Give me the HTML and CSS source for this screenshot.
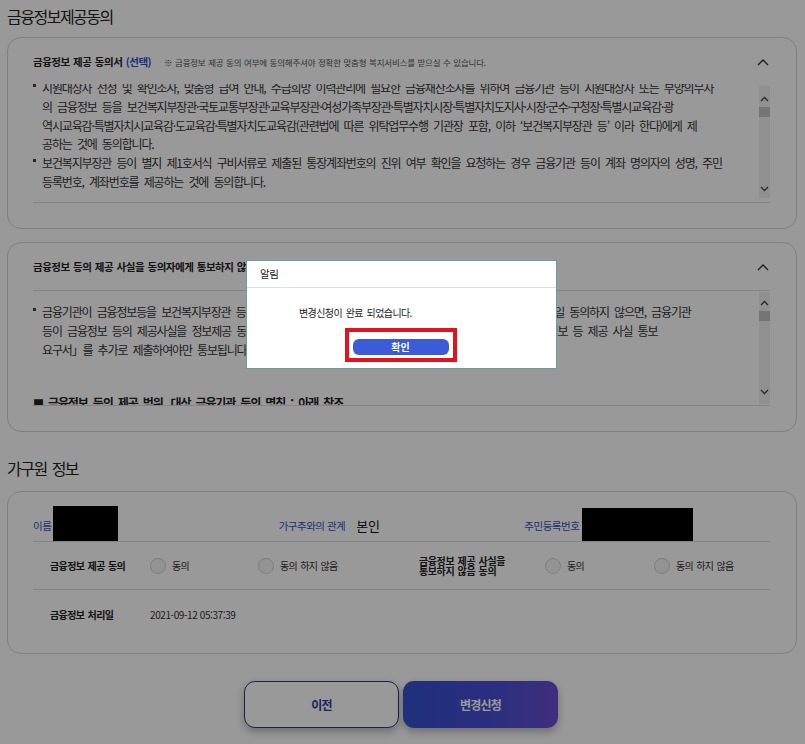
FILE: index.html
```html
<!DOCTYPE html>
<html lang="ko">
<head>
<meta charset="utf-8">
<title>금융정보제공동의</title>
<link rel="stylesheet" href="styles.css">
</head>
<body>
<div class="page">
  <h2 class="section-title">금융정보제공동의</h2>

  <section class="card">
    <div class="agree-head">
      <div class="agree-title"><strong>금융정보 제공 동의서 <span class="opt">(선택)</span></strong><span class="hint">※ 금융정보 제공 동의 여부에 동의해주셔야 정확한 맞춤형 복지서비스를 받으실 수 있습니다.</span></div>
      <svg class="chev" width="12" height="8" viewBox="0 0 12 8"><polyline points="1,7 6,2 11,7" fill="none" stroke="#333" stroke-width="1.4"/></svg>
    </div>
    <div class="terms terms-first">
      <div class="terms-view">
        <div class="terms-content scrolled">
          <p class="item">지원대상자 선정 및 확인조사, 맞춤형 급여 안내, 수급희망 이력관리에 필요한 금융재산조사를 위하여 금융기관 등이 지원대상자 또는 부양의무자<br>의 금융정보 등을 보건복지부장관·국토교통부장관·교육부장관·여성가족부장관·특별자치시장·특별자치도지사·시장·군수·구청장·특별시교육감·광<br>역시교육감·특별자치시교육감·도교육감·특별자치도교육감(관련법에 따른 위탁업무수행 기관장 포함, 이하 ‘보건복지부장관 등’ 이라 한다)에게 제<br>공하는 것에 동의합니다.</p>
          <p class="item">보건복지부장관 등이 별지 제1호서식 구비서류로 제출된 통장계좌번호의 진위 여부 확인을 요청하는 경우 금융기관 등이 계좌 명의자의 성명, 주민<br>등록번호, 계좌번호를 제공하는 것에 동의합니다.</p>
        </div>
      </div>
      <div class="scrollbar">
        <svg class="sb-arrow" width="9" height="6" viewBox="0 0 9 6"><polyline points="1,5 4.5,1.5 8,5" fill="none" stroke="#444" stroke-width="1.3"/></svg>
        <div class="sb-thumb"></div>
        <div class="sb-track"></div>
        <svg class="sb-arrow" width="9" height="6" viewBox="0 0 9 6"><polyline points="1,1 4.5,4.5 8,1" fill="none" stroke="#444" stroke-width="1.3"/></svg>
      </div>
    </div>
  </section>

  <section class="card">
    <div class="agree-head">
      <div class="agree-title"><strong>금융정보 등의 제공 사실을 동의자에게 통보하지 않음 동의서 <span class="opt">(선택)</span></strong></div>
      <svg class="chev" width="12" height="8" viewBox="0 0 12 8"><polyline points="1,7 6,2 11,7" fill="none" stroke="#333" stroke-width="1.4"/></svg>
    </div>
    <div class="terms terms-second">
      <div class="terms-view">
        <div class="terms-content padded">
          <p class="item">금융기관이 금융정보등을 보건복지부장관 등에게 제공한 사실을 동의자에게 통보하지 않는 것에 동의합니다.(만일 동의하지 않으면, 금융기관<br>등이 금융정보 등의 제공사실을 정보제공 동의자에게 통보하여야 하며, 통보를 원하는 경우는 별첨서식「금융정보 등 제공 사실 통보<br>요구서」를 추가로 제출하여야만 통보됩니다.)</p>
          <p class="scope"><span class="sq">■</span> 금융정보 등의 제공 범위, 대상 금융기관 등의 명칭 : 아래 참조</p>
        </div>
      </div>
      <div class="scrollbar">
        <svg class="sb-arrow" width="9" height="6" viewBox="0 0 9 6"><polyline points="1,5 4.5,1.5 8,5" fill="none" stroke="#444" stroke-width="1.3"/></svg>
        <div class="sb-thumb"></div>
        <div class="sb-track"></div>
        <svg class="sb-arrow" width="9" height="6" viewBox="0 0 9 6"><polyline points="1,1 4.5,4.5 8,1" fill="none" stroke="#444" stroke-width="1.3"/></svg>
      </div>
    </div>
  </section>

  <h2 class="section-title member-title">가구원 정보</h2>

  <section class="card member-card">
    <div class="member-row info-row">
      <div class="info-col"><span class="info-label">이름</span><span class="redact redact-name"></span></div>
      <div class="info-col"><span class="info-label">가구주와의 관계</span><span class="info-value">본인</span></div>
      <div class="info-col"><span class="info-label">주민등록번호</span><span class="redact redact-id"></span></div>
    </div>
    <div class="member-row consent-row">
      <div class="row-label">금융정보 제공 동의</div>
      <label class="radio"><span class="circle"></span>동의</label>
      <label class="radio"><span class="circle"></span>동의 하지 않음</label>
      <div class="row-label two-line">금융정보 제공 사실을<br>통보하지 않음 동의</div>
      <label class="radio"><span class="circle"></span>동의</label>
      <label class="radio"><span class="circle"></span>동의 하지 않음</label>
    </div>
    <div class="member-row date-row">
      <div class="row-label">금융정보 처리일</div>
      <div class="date">2021-09-12 05:37:39</div>
    </div>
  </section>

  <div class="actions">
    <button class="btn btn-prev">이전</button>
    <button class="btn btn-submit">변경신청</button>
  </div>
</div>

<div class="overlay"></div>

<div class="modal">
  <div class="modal-head">알림</div>
  <div class="modal-body">
    <p class="modal-msg">변경신청이 완료 되었습니다.</p>
    <div class="highlight"><button class="btn-ok">확인</button></div>
  </div>
</div>
</body>
</html>
```

FILE: styles.css
```css
* { box-sizing: border-box; }

html, body {
  margin: 0;
  padding: 0;
  background: #ffffff;
}

body {
  font-family: "Noto Sans CJK KR", "Noto Sans", sans-serif;
  color: #333;
  width: 805px;
  height: 744px;
  overflow: hidden;
}

.page {
  padding: 0 8px 0 7px;
}

.section-title {
  margin: 0;
  padding-top: 5px;
  font-size: 16px;
  line-height: 22px;
  font-weight: 400;
  letter-spacing: -1.5px;
  word-spacing: 2px;
  color: #222;
}

.card {
  border: 1px solid #d6d6d6;
  border-radius: 14px;
  padding: 0 26px 25px 25px;
  margin-top: 10px;
  background: #fff;
}

.card + .card {
  margin-top: 13px;
}

.agree-head {
  display: flex;
  align-items: center;
  justify-content: space-between;
  padding-top: 14px;
  height: 34px;
}

.agree-title {
  display: flex;
  align-items: center;
  line-height: 20px;
}

.agree-title strong {
  font-size: 10.5px;
  font-weight: 700;
  letter-spacing: -0.5px;
  word-spacing: 1px;
  color: #222;
}

.opt {
  color: #2d4fd2;
}

.hint {
  margin-left: 13px;
  font-size: 8.5px;
  letter-spacing: -0.2px;
  word-spacing: 0.5px;
  color: #555;
}

.chev {
  margin-right: 1px;
}

.terms {
  display: flex;
  margin-top: 12px;
  border-bottom: 1px solid #dcdcdc;
}

.terms-first {
  height: 119px;
}

.terms-second {
  margin-top: 13px;
  border-top: 1px solid #dcdcdc;
  height: 116px;
}

.terms-view {
  flex: 1;
  overflow: hidden;
}

.terms-content {
  font-size: 12px;
  line-height: 18.8px;
  letter-spacing: -1.15px;
  word-spacing: 3px;
  color: #333;
  white-space: nowrap;
}

.terms-content.scrolled {
  margin-top: -5px;
}

.terms-content.padded {
  padding-top: 12px;
}

.terms-content p {
  margin: 0;
}

.item {
  padding-left: 9px;
}

.item::before {
  content: "";
  display: inline-block;
  width: 3px;
  height: 3px;
  background: #444;
  margin-left: -9px;
  margin-right: 6px;
  vertical-align: top;
  margin-top: 5px;
}

.scope {
  margin-top: 35px !important;
  font-weight: 700;
  color: #222;
}

.sq {
  font-size: 11px;
}

.scrollbar {
  width: 11px;
  margin: 2px 0 4px 0;
  background: #f0f0f0;
  display: flex;
  flex-direction: column;
  align-items: center;
  padding: 10px 0 6px;
}

.terms-second .scrollbar {
  margin: 1px 0 1px 0;
  padding: 8px 0 9px;
}

.sb-arrow {
  display: block;
  flex: none;
}

.sb-thumb {
  width: 11px;
  height: 10px;
  background: #c4c4c4;
  margin-top: 5px;
}

.sb-track {
  flex: 1;
}

.member-title {
  margin-top: 25px;
  padding-top: 0;
}

.member-card {
  margin-top: 12px;
  padding-bottom: 15px;
}

.member-row {
  display: flex;
  align-items: center;
  border-bottom: 1px solid #dcdcdc;
}

.info-row {
  padding-top: 14px;
  height: 50px;
  align-items: flex-start;
}

.info-col {
  flex: 1;
  display: flex;
  align-items: center;
  height: 35px;
}

.info-label {
  font-size: 10.5px;
  letter-spacing: -0.5px;
  color: #3450c0;
  margin-top: 3px;
}

.info-value {
  margin-left: 11px;
  font-size: 13px;
  color: #111;
  letter-spacing: -0.3px;
  margin-top: 3px;
}

.redact {
  display: block;
  background: #000;
  height: 35px;
}

.redact-name {
  width: 65px;
  margin-left: 2px;
}

.redact-id {
  width: 111px;
  margin-left: 3px;
  margin-top: 2px;
  height: 33px;
}

.consent-row {
  display: grid;
  grid-template-columns: 100px 108px 161px 126px 109px 1fr;
  padding-left: 17px;
  height: 48px;
  align-items: center;
}

.row-label {
  font-size: 10px;
  font-weight: 700;
  letter-spacing: -0.6px;
  word-spacing: 1px;
  color: #222;
}

.two-line {
  line-height: 10px;
  letter-spacing: -0.4px;
}

.radio {
  display: flex;
  align-items: center;
  font-size: 10px;
  letter-spacing: -0.8px;
  word-spacing: 1.5px;
  color: #333;
}

.circle {
  width: 16px;
  height: 16px;
  border-radius: 50%;
  border: 1px solid #d2d2d2;
  background: #f6f6f6;
  margin-right: 6px;
  flex: none;
}

.date-row {
  display: grid;
  grid-template-columns: 100px 1fr;
  padding-left: 17px;
  height: 48px;
  border-bottom: none;
}

.date {
  font-size: 10px;
  letter-spacing: -0.4px;
  color: #333;
}

.actions {
  display: flex;
  justify-content: center;
  gap: 4px;
  margin-top: 27px;
  padding-right: 2px;
}

.btn {
  width: 155px;
  height: 47px;
  border-radius: 11px;
  font-family: inherit;
  font-size: 12px;
  font-weight: 700;
  letter-spacing: -0.8px;
  box-shadow: 0 4px 8px rgba(0, 0, 0, 0.28);
}

.btn-prev {
  background: #fff;
  border: 1px solid #2a3890;
  color: #2a3c9a;
}

.btn-submit {
  border: none;
  color: #fff;
  background: linear-gradient(90deg, #3450d0 0%, #4a4ed4 60%, #6a4ed2 100%);
}

.overlay {
  position: fixed;
  inset: 0;
  background: rgba(0, 0, 0, 0.4);
  z-index: 10;
}

.modal {
  position: fixed;
  left: 246px;
  top: 260px;
  width: 311px;
  height: 109px;
  background: #fff;
  border: 1px solid #6c9e9e;
  z-index: 20;
}

.modal-head {
  height: 27px;
  border-bottom: 1px solid #dedede;
  padding-left: 13px;
  font-size: 10.5px;
  line-height: 26px;
  color: #222;
  letter-spacing: -0.3px;
}

.modal-body {
  padding-top: 17px;
}

.modal-msg {
  margin: 0 0 7px 52px;
  font-size: 10px;
  line-height: 16px;
  letter-spacing: -0.6px;
  word-spacing: 1.5px;
  color: #222;
}

.highlight {
  width: 112px;
  margin: 0 auto;
  border: 4px solid #e3121e;
  padding: 7px 4px 3px 4px;
  position: relative;
  left: -1px;
}

.btn-ok {
  display: block;
  width: 96px;
  height: 16px;
  border: none;
  border-radius: 6px;
  background: #3c5bd8;
  color: #fff;
  font-family: inherit;
  font-size: 10px;
  font-weight: 700;
  line-height: 16px;
  padding: 0;
}
```
